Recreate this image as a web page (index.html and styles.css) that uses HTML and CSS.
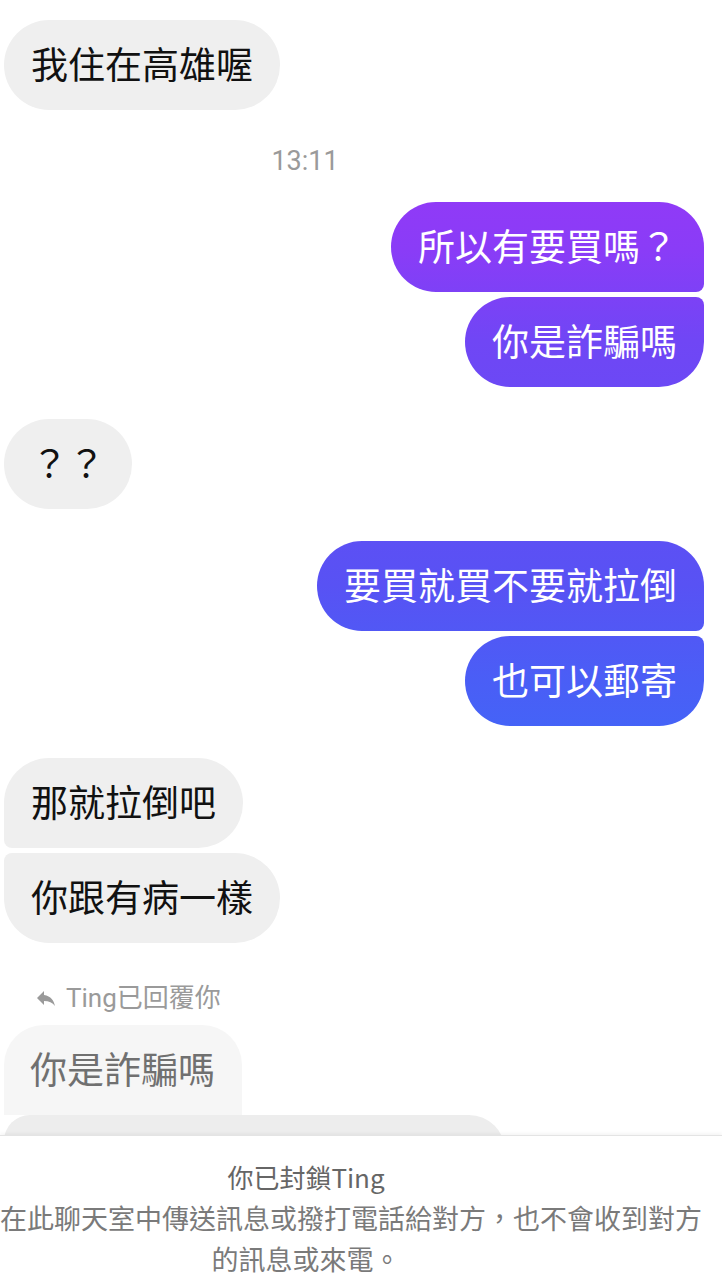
FILE: index.html
```html
<!DOCTYPE html>
<html lang="zh-Hant">
<head>
    <meta charset="UTF-8">
    <meta name="viewport" content="width=device-width, initial-scale=1.0">
    <title>Ting</title>
    <link rel="stylesheet" href="styles.css">
</head>
<body>
<div class="chat">
    <div class="thread">
        <div class="bubble in">我住在高雄喔</div>

        <div class="stamp">13:11</div>

        <div class="group out after-stamp">
            <div class="bubble out first">所以有要買嗎？</div>
            <div class="bubble out last">你是詐騙嗎</div>
        </div>

        <div class="group in">
            <div class="bubble in">？？</div>
        </div>

        <div class="group out">
            <div class="bubble out first">要買就買不要就拉倒</div>
            <div class="bubble out last">也可以郵寄</div>
        </div>

        <div class="group in">
            <div class="bubble in first">那就拉倒吧</div>
            <div class="bubble in last">你跟有病一樣</div>
        </div>

        <!-- reply to an earlier message -->
        <div class="reply-label">
            <svg class="reply-icon" viewBox="0 0 24 24" width="24" height="24">
                <path d="M10 9V5l-7 7 7 7v-4.1c5 0 8.5 1.6 11 5.1-1-5-4-10-11-11z" fill="#9a9a9a"/>
            </svg>
            <span>Ting已回覆你</span>
        </div>
        <div class="quoted">你是詐騙嗎</div>
        <div class="reply-body"></div>
    </div>

    <div class="blocked">
        <div class="blocked-title">你已封鎖Ting</div>
        <div class="blocked-line">在此聊天室中傳送訊息或撥打電話給對方，也不會收到對方</div>
        <div class="blocked-line">的訊息或來電。</div>
    </div>
</div>
</body>
</html>
```

FILE: styles.css
```css
/* General styles */
body {
    margin: 0;
    padding: 0;
    background-color: #ffffff;
    font-family: Roboto, "Noto Sans CJK TC", sans-serif;
}

.chat {
    width: 722px;
    height: 1280px;
    overflow: hidden;
    display: flex;
    flex-direction: column;
}

/* Message list */
.thread {
    height: 1135px;
    flex-shrink: 0;
    overflow: hidden;
    padding: 20px 18px 0 4px;
    box-sizing: border-box;
    display: flex;
    flex-direction: column;
    align-items: flex-start;
}

.group {
    display: flex;
    flex-direction: column;
    gap: 5px;
    margin-top: 32px;
}

.group.after-stamp {
    margin-top: 26px;
}

.group.out {
    align-self: flex-end;
    align-items: flex-end;
}

.group.in {
    align-self: flex-start;
    align-items: flex-start;
}

/* Bubbles */
.bubble {
    height: 90px;
    line-height: 87px;
    padding: 3px 27px 0;
    font-size: 37px;
    white-space: nowrap;
    border-radius: 45px;
    box-sizing: border-box;
}

.bubble.in {
    background-color: #efefef;
    color: #111111;
}

.bubble.out {
    color: #ffffff;
    background: linear-gradient(180deg, #903af7 200px, #8a3cf7 250px, #7046f5 340px, #5852f4 585px, #4a5ef6 680px, #4463f7 730px) fixed;
}

.bubble.out.first {
    border-bottom-right-radius: 8px;
}

.bubble.out.last {
    border-top-right-radius: 8px;
}

.bubble.in.first {
    border-bottom-left-radius: 8px;
}

.bubble.in.last {
    border-top-left-radius: 8px;
}

/* Timestamp */
.stamp {
    align-self: stretch;
    margin: 36px 98px 0 0;
    text-align: center;
    font-size: 27px;
    line-height: 30px;
    color: #9a9a9a;
}

/* Reply */
.reply-label {
    display: flex;
    align-items: center;
    gap: 8px;
    margin: 40px 0 0 30px;
    font-size: 26px;
    line-height: 30px;
    color: #9a9a9a;
}

.quoted {
    margin-top: 12px;
    height: 90px;
    line-height: 94px;
    padding: 0 27px 0 26px;
    font-size: 37px;
    color: #707070;
    background-color: #f6f6f6;
    border-radius: 40px 40px 0 0;
}

.reply-body {
    width: 501px;
    height: 90px;
    flex-shrink: 0;
    background-color: #ededed;
    border-radius: 26px 36px 0 0;
}

/* Blocked notice */
.blocked {
    flex: 1;
    border-top: 1px solid #e4e4e4;
    box-shadow: 0 -2px 3px rgba(0, 0, 0, 0.04);
    padding: 20px 110px 0 0;
    text-align: center;
    font-family: "Noto Sans CJK TC", sans-serif;
    font-size: 27px;
    line-height: 41px;
    color: #7a7a7a;
    background-color: #ffffff;
}

.blocked-title {
    color: #666666;
    font-size: 26px;
}

.blocked-line {
    white-space: nowrap;
}
```
